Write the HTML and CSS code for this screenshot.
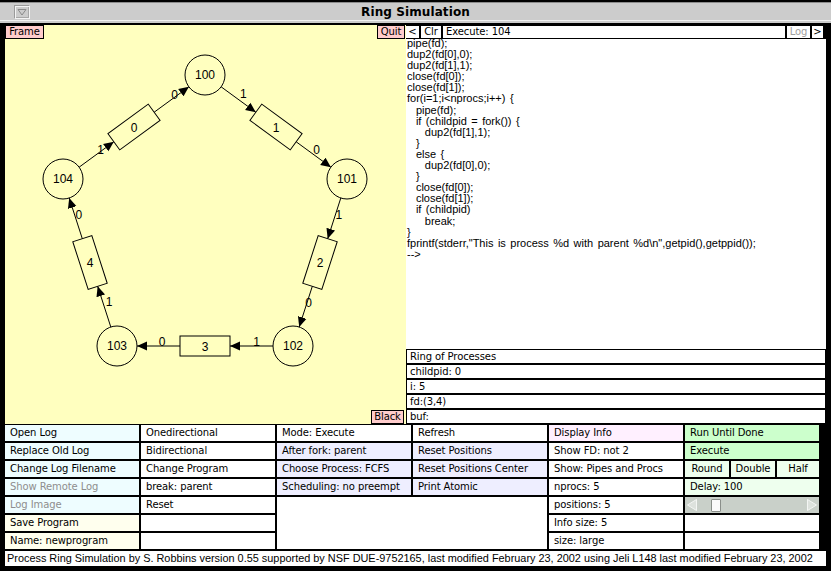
FILE: index.html
```html
<!DOCTYPE html>
<html>
<head>
<meta charset="utf-8">
<title>Ring Simulation</title>
<link rel="stylesheet" href="styles.css">
</head>
<body>
<div class="window">
  <div class="titlebar">
    <div class="closebox"><svg width="10" height="8" viewBox="0 0 10 8"><path d="M1 1.5 H9 L5 7 Z" fill="none" stroke="#8a8a8a" stroke-width="1"/></svg></div>
    <div class="title">Ring Simulation</div>
  </div>
  <div class="main">
    <div class="canvas">
      <svg class="diagram" width="401" height="399" viewBox="5 25 401 399">
        <defs>
          <marker id="ah" markerUnits="userSpaceOnUse" markerWidth="11" markerHeight="10" refX="10" refY="5" orient="auto">
            <path d="M0,0.5 L10,5 L0,9.5 Z" fill="#000"/>
          </marker>
        </defs>
        <g stroke="#000" stroke-width="1" fill="none">
          <circle cx="205" cy="75" r="20"/>
          <circle cx="347" cy="179" r="20"/>
          <circle cx="293" cy="346" r="20"/>
          <circle cx="117" cy="346" r="20"/>
          <circle cx="63" cy="179" r="20"/>
          <rect x="-25" y="-10" width="50" height="20" transform="translate(134 127) rotate(-36.22)"/>
          <rect x="-25" y="-10" width="50" height="20" transform="translate(276 127) rotate(36.22)"/>
          <rect x="-25" y="-10" width="50" height="20" transform="translate(320 262.5) rotate(-72.08)"/>
          <rect x="-25" y="-10" width="50" height="20" transform="translate(205 346)"/>
          <rect x="-25" y="-10" width="50" height="20" transform="translate(90 262.5) rotate(72.08)"/>
          <g marker-end="url(#ah)">
            <line x1="79.1" y1="167.2" x2="113.8" y2="141.8"/>
            <line x1="154.2" y1="112.2" x2="188.9" y2="86.8"/>
            <line x1="221.1" y1="86.8" x2="255.8" y2="112.2"/>
            <line x1="296.2" y1="141.8" x2="330.9" y2="167.2"/>
            <line x1="340.8" y1="198" x2="327.7" y2="238.7"/>
            <line x1="312.3" y1="286.3" x2="299.2" y2="327"/>
            <line x1="273" y1="346" x2="230" y2="346"/>
            <line x1="180" y1="346" x2="137" y2="346"/>
            <line x1="110.8" y1="327" x2="97.7" y2="286.3"/>
            <line x1="82.3" y1="238.7" x2="69.2" y2="198"/>
          </g>
        </g>
        <g class="dtext" text-anchor="middle" fill="#000">
          <text x="205" y="79.3">100</text>
          <text x="347" y="183.3">101</text>
          <text x="293" y="350.3">102</text>
          <text x="117" y="350.3">103</text>
          <text x="63" y="183.3">104</text>
          <text x="134" y="131.5">0</text>
          <text x="276" y="131.5">1</text>
          <text x="320" y="267">2</text>
          <text x="205" y="350.5">3</text>
          <text x="90" y="267">4</text>
          <text x="100.7" y="153.6">1</text>
          <text x="174.7" y="99.3">0</text>
          <text x="243.3" y="97.6">1</text>
          <text x="316.7" y="154.3">0</text>
          <text x="338.8" y="218.5">1</text>
          <text x="308.7" y="307.1">0</text>
          <text x="256.7" y="345.6">1</text>
          <text x="162" y="346">0</text>
          <text x="109.2" y="306">1</text>
          <text x="78.8" y="218.5">0</text>
        </g>
      </svg>
      <div class="pbtn frame-btn">Frame</div>
      <div class="pbtn quit-btn">Quit</div>
      <div class="pbtn black-btn">Black</div>
    </div>
    <div class="side">
      <div class="toolbar">
        <div class="tb tb-lt">&lt;</div>
        <div class="tb tb-clr">Clr</div>
        <div class="tb tb-exec">Execute: 104</div>
        <div class="tb tb-log">Log</div>
        <div class="tb tb-gt">&gt;</div>
      </div>
      <div class="code"><pre>pipe(fd);
dup2(fd[0],0);
dup2(fd[1],1);
close(fd[0]);
close(fd[1]);
for(i=1;i&lt;nprocs;i++) {
  pipe(fd);
  if (childpid = fork()) {
    dup2(fd[1],1);
  }
  else {
    dup2(fd[0],0);
  }
  close(fd[0]);
  close(fd[1]);
  if (childpid)
    break;
}
fprintf(stderr,"This is process %d with parent %d\n",getpid(),getppid());
--&gt;</pre></div>
      <div class="status">
        <div class="srow">Ring of Processes</div>
        <div class="srow">childpid: 0</div>
        <div class="srow">i: 5</div>
        <div class="srow">fd:(3,4)</div>
        <div class="srow">buf:</div>
      </div>
    </div>
  </div>
  <div class="grid">
    <div class="cell cyan">Open Log</div>
    <div class="cell">Onedirectional</div>
    <div class="cell">Mode: Execute</div>
    <div class="cell">Refresh</div>
    <div class="cell pinkish">Display Info</div>
    <div class="cell green">Run Until Done</div>

    <div class="cell cyan">Replace Old Log</div>
    <div class="cell">Bidirectional</div>
    <div class="cell lav">After fork: parent</div>
    <div class="cell lav">Reset Positions</div>
    <div class="cell">Show FD: not 2</div>
    <div class="cell green">Execute</div>

    <div class="cell cyan">Change Log Filename</div>
    <div class="cell">Change Program</div>
    <div class="cell lav">Choose Process: FCFS</div>
    <div class="cell lav">Reset Positions Center</div>
    <div class="cell">Show: Pipes and Procs</div>
    <div class="cell split">
      <div class="sbtn sb-round">Round</div>
      <div class="sbtn sb-double">Double</div>
      <div class="sbtn sb-half">Half</div>
    </div>

    <div class="cell cyan dim">Show Remote Log</div>
    <div class="cell">break: parent</div>
    <div class="cell lav">Scheduling: no preempt</div>
    <div class="cell lav">Print Atomic</div>
    <div class="cell">nprocs: 5</div>
    <div class="cell lgreen">Delay: 100</div>

    <div class="cell cyan dim">Log Image</div>
    <div class="cell">Reset</div>
    <div class="cell blank-area"></div>
    <div class="cell">positions: 5</div>
    <div class="cell scroll">
      <svg class="arrow" width="12" height="14" viewBox="0 0 12 14"><path d="M10.5 1.5 L1.5 7 L10.5 12.5 Z" fill="#dde2dd" stroke="#f4f6f4" stroke-width="1"/></svg>
      <div class="thumb"></div>
      <div class="track-fill"></div>
      <svg class="arrow" width="12" height="14" viewBox="0 0 12 14"><path d="M1.5 1.5 L10.5 7 L1.5 12.5 Z" fill="#dde2dd" stroke="#f4f6f4" stroke-width="1"/></svg>
    </div>

    <div class="cell cream">Save Program</div>
    <div class="cell"></div>
    <div class="cell">Info size: 5</div>
    <div class="cell"></div>

    <div class="cell cream">Name: newprogram</div>
    <div class="cell"></div>
    <div class="cell">size: large</div>
    <div class="cell"></div>
  </div>
  <div class="footer">Process Ring Simulation by S. Robbins version 0.55 supported by NSF DUE-9752165, last modified February 23, 2002 using Jeli L148 last modified February 23, 2002</div>
</div>
</body>
</html>
```
FILE: styles.css
```css
* { box-sizing: border-box; }
html, body { margin: 0; padding: 0; }
body {
  background: #000;
  width: 831px;
  height: 571px;
  overflow: hidden;
  font-family: "DejaVu Sans", sans-serif;
  font-size: 10px;
  letter-spacing: -0.1px;
  color: #000;
}
.window {
  width: 831px;
  height: 571px;
  display: flex;
  flex-direction: column;
}
.titlebar {
  margin-top: 2px;
  margin-bottom: 2px;
  height: 21px;
  border-top: 1px solid #8c8c8c;
  background: linear-gradient(#cccccc 0 17px, #f2f2f2 17px 18px, #cccccc 18px);
  position: relative;
  display: flex;
  justify-content: center;
  align-items: center;
  padding-bottom: 3px;
}
.closebox {
  position: absolute;
  left: 14px;
  top: 2px;
  width: 16px;
  height: 14px;
  border: 1px solid #9a9a9a;
  border-right-color: #f4f4f4;
  border-bottom-color: #f4f4f4;
  box-shadow: inset 1px 1px 0 #f4f4f4, inset -1px -1px 0 #a8a8a8;
  background: #cccccc;
  display: flex;
  align-items: center;
  justify-content: center;
}
.closebox svg { display: block; }
.title {
  font-weight: bold;
  font-size: 12px;
  letter-spacing: 0.1px;
}
.main {
  display: flex;
  height: 399px;
  padding-left: 5px;
}
.canvas {
  width: 401px;
  height: 399px;
  background: #ffffbf;
  position: relative;
}
.diagram { display: block; }
.dtext {
  font-family: "Liberation Sans", Arial, sans-serif;
  font-size: 12px;
  letter-spacing: 0;
}
.pbtn {
  position: absolute;
  background: #ffcccc;
  border: 1px solid #000;
  height: 14px;
  line-height: 12px;
  text-align: center;
}
.frame-btn { left: 0; top: 0; width: 39px; }
.quit-btn { right: 1px; top: 0; width: 28px; }
.black-btn { right: 2px; bottom: 0; width: 33px; }
.side {
  width: 420px;
  display: flex;
  flex-direction: column;
}
.toolbar {
  height: 14px;
  display: flex;
  gap: 2px;
  padding: 1px 3px 1px 0;
  background: #000;
}
.tb {
  background: #fff;
  height: 12px;
  line-height: 12px;
  text-align: center;
}
.tb-lt { width: 13px; }
.tb-clr { width: 20px; }
.tb-exec { flex: 1; text-align: left; padding-left: 3px; }
.tb-log { width: 23px; color: #a0a0a0; }
.tb-gt { width: 11px; }
.code {
  flex: 1;
  background: #fff;
}
.code pre {
  margin: -1px 0 0 0;
  padding-left: 1px;
  font-family: "Liberation Sans", Arial, sans-serif;
  font-size: 11px;
  line-height: 11.1px;
  letter-spacing: 0;
  word-spacing: 1.4px;
}
.status {
  background: #000;
  padding: 1px;
  display: flex;
  flex-direction: column;
  gap: 2px;
}
.srow {
  height: 13px;
  background: #fff;
  line-height: 13px;
  padding-left: 3px;
}
.grid {
  margin-left: 4px;
  width: 818px;
  height: 126px;
  background: #000;
  padding: 1px;
  display: grid;
  grid-template-columns: repeat(6, 134px);
  grid-template-rows: repeat(7, 16px);
  gap: 2px;
}
.cell {
  background: #fff;
  line-height: 16px;
  padding-left: 5px;
  white-space: nowrap;
  overflow: hidden;
}
.cyan { background: #eefdff; }
.lav { background: #eeeeff; }
.pinkish { background: #fff0ff; }
.green { background: #ccffcc; }
.lgreen { background: #eeffee; }
.cream { background: #ffffee; }
.dim { color: #8e8e8e; }
.blank-area {
  grid-column: 3 / 5;
  grid-row: 5 / 8;
}
.split {
  display: flex;
  gap: 2px;
  padding: 0;
  background: #000;
}
.sbtn {
  background: #eeffee;
  text-align: center;
}
.sb-round { width: 44px; }
.sb-double { width: 44px; }
.sb-half { flex: 1; }
.scroll {
  display: flex;
  align-items: center;
  padding: 0 1px;
  background: #c9d0c9;
}
.arrow { display: block; flex: none; }
.thumb {
  flex: none;
  width: 10px;
  height: 13px;
  margin-left: 13px;
  background: #fbfbfb;
  border: 1px solid #8a8f8a;
  border-radius: 1px;
}
.track-fill { flex: 1; }
.footer {
  margin: 1px 0 0 5px;
  width: 821px;
  height: 15px;
  background: #fff;
  font-family: "Liberation Sans", Arial, sans-serif;
  font-size: 10.9px;
  letter-spacing: 0;
  line-height: 15px;
  padding-left: 2px;
  white-space: nowrap;
}
```
